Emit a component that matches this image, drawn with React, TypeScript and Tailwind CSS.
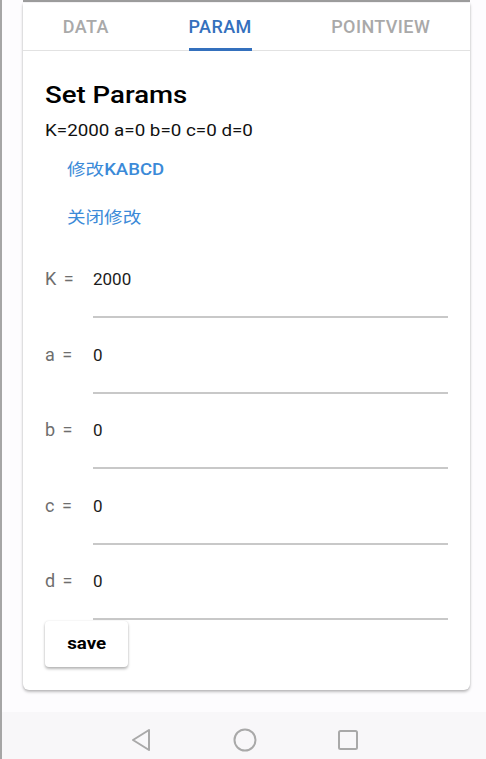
import { useState } from "react";

const tabs = ["DATA", "PARAM", "POINTVIEW"];

const params = [
  { key: "K", value: "2000" },
  { key: "a", value: "0" },
  { key: "b", value: "0" },
  { key: "c", value: "0" },
  { key: "d", value: "0" },
];

function NavBar() {
  return (
    <div className="flex h-[47px] items-center bg-[#f8f7f9]">
      <div className="flex w-full items-center justify-center pt-[8px]">
        <svg width="22" height="24" viewBox="0 0 22 24">
          <path d="M19 2 L3 12 L19 22 Z" fill="none" stroke="#a9a9a9" strokeWidth="2" strokeLinejoin="round" />
        </svg>
        <svg width="24" height="24" viewBox="0 0 24 24" className="ml-[81px]">
          <circle cx="12" cy="12" r="10.5" fill="none" stroke="#a9a9a9" strokeWidth="2" />
        </svg>
        <svg width="22" height="22" viewBox="0 0 22 22" className="ml-[80px]">
          <rect x="2" y="2" width="18" height="18" rx="1.5" fill="none" stroke="#a9a9a9" strokeWidth="2" />
        </svg>
      </div>
    </div>
  );
}

export default function App() {
  const [active, setActive] = useState(1);
  const [editing, setEditing] = useState(true);

  return (
    <div
      className="flex min-h-[759px] flex-col border-l-2 border-[#a6a6a6] bg-[#fdfcfe]"
      style={{ fontFamily: "Roboto, 'Noto Sans CJK SC', sans-serif" }}
    >
      <div className="ml-[21px] h-[2px] w-[447px] bg-[#9c9c9c]" />
      <div className="ml-[21px] mt-[1px] w-[447px] rounded-b-[6px] bg-white shadow-[0_2px_3px_rgba(0,0,0,0.25),0_0_2px_rgba(0,0,0,0.12)]">
        <div className="flex h-[48px] justify-around border-b border-[#e2e2e2]">
          {tabs.map((t, i) => (
            <button
              key={t}
              type="button"
              onClick={() => setActive(i)}
              className={`relative flex items-center px-0 text-[18px] font-medium tracking-[0.4px] ${
                active === i ? "text-[#3470bd]" : "text-[#a9a9a9]"
              }`}
            >
              {t}
              {active === i && (
                <span className="absolute bottom-[-1px] left-0 right-0 h-[3px] bg-[#3470bd]" />
              )}
            </button>
          ))}
        </div>

        <div className="px-[22px] pb-[23px] pt-[28px]">
          <div className="text-[24px] font-medium leading-[32px] text-black">
            <span className="inline-block origin-left scale-x-[1.15]">Set Params</span>
          </div>
          <div className="mt-[8px] text-[16.5px] leading-[24px] text-[#111]">
            <span className="inline-block origin-left scale-x-[1.14]">K=2000 a=0 b=0 c=0 d=0</span>
          </div>
          <button
            type="button"
            onClick={() => setEditing(true)}
            className="ml-[22px] mt-[15px] block text-[16px] leading-[24px] text-[#3b8ad8]"
          >
            <span className="inline-block origin-left scale-x-[1.16]">
              修改<span className="font-medium">KABCD</span>
            </span>
          </button>
          <button
            type="button"
            onClick={() => setEditing(false)}
            className="ml-[22px] mt-[24px] block text-[16px] leading-[24px] text-[#3b8ad8]"
          >
            <span className="inline-block origin-left scale-x-[1.16]">关闭修改</span>
          </button>

          <div className="mt-[37px] flex flex-col gap-[24.5px]">
            {params.map((p) => (
              <div key={p.key} className="flex items-start">
                <div className="w-[48px] text-[18px] leading-[24px] tracking-[1.5px] text-[#6e6e6e]">
                  {p.key} =
                </div>
                <div className="h-[51px] flex-1 border-b-2 border-[#c8c8c8]">
                  <input
                    readOnly={!editing}
                    defaultValue={p.value}
                    className="w-full bg-transparent text-[17px] leading-[24px] text-[#1c1c1c] outline-none"
                  />
                </div>
              </div>
            ))}
          </div>

          <button
            type="button"
            className="mt-[1px] h-[46px] w-[83px] rounded-[4px] bg-white text-[16px] font-bold text-black shadow-[0_2px_3px_rgba(0,0,0,0.28),0_0_2px_rgba(0,0,0,0.1)]"
          >
            <span className="inline-block scale-x-[1.17]">save</span>
          </button>
        </div>
      </div>
      <div className="h-[22px]" />
      <NavBar />
    </div>
  );
}
